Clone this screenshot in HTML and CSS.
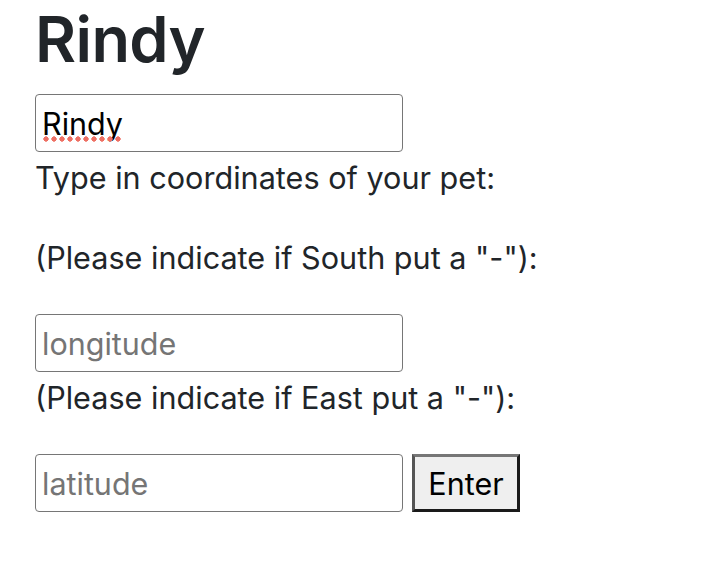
FILE: index.html
```html
<!DOCTYPE html>
<html>
<head>
<meta charset="utf-8">
<link rel="stylesheet" href="styles.css">
</head>
<body>
<div class="page">
  <h1 class="title">Rindy</h1>
  <div class="name-wrap">
    <input class="field" type="text" value="Rindy">
    <span class="spell"></span>
  </div>
  <div class="label first">Type in coordinates of your pet:</div>
  <div class="label blank">&nbsp;</div>
  <div class="label">(Please indicate if South put a "-"):</div>
  <input class="field field-gap" type="text" placeholder="longitude">
  <div class="label first">(Please indicate if East put a "-"):</div>
  <div class="row field-gap">
    <input class="field" type="text" placeholder="latitude">
    <button class="btn" type="button">Enter</button>
  </div>
</div>
</body>
</html>
```
FILE: styles.css
```css
html, body {
  margin: 0;
  padding: 0;
  background: #ffffff;
}
.page {
  padding: 0 35px;
  font-family: Inter, "Liberation Sans", sans-serif;
  font-size: 30.6px;
  color: #212529;
}
.title {
  margin: 0 0 16px 0;
  font-size: 63px;
  font-weight: 600;
  line-height: 78px;
  letter-spacing: -0.6px;
}
.name-wrap {
  position: relative;
  width: 368px;
}
.spell {
  position: absolute;
  left: 7px;
  top: 42px;
  width: 80px;
  height: 6px;
  background-image: radial-gradient(circle, #ee6f63 2.4px, transparent 2.9px);
  background-size: 8px 6px;
  background-repeat: repeat-x;
  pointer-events: none;
}
.field {
  display: block;
  box-sizing: border-box;
  width: 368px;
  height: 58px;
  margin: 0;
  padding: 0 6px;
  border: 1px solid #767676;
  border-radius: 4px;
  font-family: Inter, "Liberation Sans", sans-serif;
  font-size: 30.5px;
  color: #000000;
  background: #ffffff;
  outline: none;
}
.field::placeholder {
  color: #757575;
}
.label {
  line-height: 40px;
}
.label.first {
  margin-top: 6px;
}
.field-gap {
  margin-top: 36px;
}
.row {
  display: flex;
  gap: 9px;
}
.btn {
  box-sizing: border-box;
  width: 108px;
  height: 58px;
  margin: 0;
  padding: 0 4px;
  background: #efefef;
  border-style: solid;
  border-width: 3px;
  border-color: #767676 #1a1a1a #1a1a1a #555555;
  font-family: Inter, "Liberation Sans", sans-serif;
  font-size: 30.5px;
  color: #000000;
}
```
